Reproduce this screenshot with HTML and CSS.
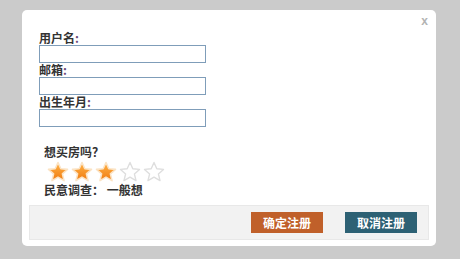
FILE: index.html
```html
<!DOCTYPE html>
<html lang="zh-CN">
<head>
  <meta charset="UTF-8">
  <title>注册</title>
  <link rel="stylesheet" href="styles.css">
</head>
<body>
  <div class="dialog">
    <a class="close" href="#">x</a>

    <div class="fields">
      <label>用户名<span class="colon">:</span></label>
      <input type="text" class="txt">
      <label>邮箱<span class="colon">:</span></label>
      <input type="text" class="txt">
      <label>出生年月<span class="colon">:</span></label>
      <input type="text" class="txt">
    </div>

    <div class="survey">
      <div class="question">想买房吗？</div>
      <div class="stars" id="stars"></div>
      <div class="result">民意调查： <span id="level">一般想</span></div>
    </div>

    <div class="footer">
      <button class="btn btn-ok">确定注册</button>
      <button class="btn btn-cancel">取消注册</button>
    </div>
  </div>

  <script>
    const levels = ['不想', '有点想', '一般想', '很想', '非常想'];
    const starsEl = document.getElementById('stars');
    const levelEl = document.getElementById('level');
    let rating = 3;

    function starSvg(on) {
      return '<svg viewBox="0 0 22 22" width="22" height="22">' +
        '<defs><linearGradient id="g" x1="0" y1="0" x2="0" y2="1">' +
        '<stop offset="0" stop-color="#ffb347"/><stop offset="1" stop-color="#f07b10"/>' +
        '</linearGradient></defs>' +
        '<polygon points="11,1.5 13.8,7.8 20.5,8.4 15.4,12.9 17,19.6 11,16.1 5,19.6 6.6,12.9 1.5,8.4 8.2,7.8" ' +
        (on ? 'fill="url(#g)" stroke="#fbe3c4" stroke-width="1.6"' : 'fill="#fff" stroke="#dedede" stroke-width="1.4"') +
        ' stroke-linejoin="round"/></svg>';
    }

    function drawStars() {
      starsEl.innerHTML = '';
      for (let i = 1; i <= 5; i++) {
        const s = document.createElement('span');
        s.className = 'star';
        s.innerHTML = starSvg(i <= rating);
        s.onclick = () => { rating = i; levelEl.textContent = levels[i - 1]; drawStars(); };
        starsEl.appendChild(s);
      }
    }

    drawStars();
  </script>
</body>
</html>
```

FILE: styles.css
```css
* { box-sizing: border-box; margin: 0; padding: 0; }
body {
  font-family: 'Noto Sans CJK SC', 'Liberation Sans', sans-serif;
  font-size: 12px;
  background: #cbcbcb;
  padding: 10px 24px 13px 22px;
  height: 259px;
  overflow: hidden;
}

.dialog {
  position: relative;
  width: 414px;
  height: 236px;
  background: #fff;
  border-radius: 5px;
  padding-top: 21px;
}

.close {
  position: absolute;
  top: 4px;
  right: 8px;
  color: #b3b3b3;
  font-family: 'Liberation Sans', sans-serif;
  font-weight: bold;
  font-size: 12px;
  text-decoration: none;
}

.fields {
  padding-left: 17px;
  display: flex;
  flex-direction: column;
  align-items: flex-start;
}

.fields label {
  font-weight: bold;
  color: #333;
  line-height: 14px;
  height: 14px;
}

.colon { color: #6a4a7a; }

.txt {
  width: 167px;
  height: 18px;
  border: 1px solid #7f9db9;
  margin-bottom: 0;
}

.survey {
  padding: 18px 0 0 22px;
  color: #333;
  font-weight: bold;
}

.question { line-height: 14px; }

.stars {
  display: flex;
  gap: 2px;
  height: 24px;
  padding-top: 2px;
  margin-left: 3px;
}

.star {
  width: 22px;
  height: 22px;
  cursor: pointer;
}

.result { line-height: 14px; }

.footer {
  margin: 8px 7px 0;
  height: 35px;
  background: #f2f2f2;
  border: 1px solid #e8e8e8;
  display: flex;
  justify-content: flex-end;
  align-items: flex-start;
  gap: 22px;
  padding: 6px 11px 0 0;
}

.btn {
  width: 72px;
  height: 21px;
  border: none;
  color: #fff;
  font-family: 'Noto Sans CJK SC', sans-serif;
  font-weight: bold;
  font-size: 12px;
  cursor: pointer;
}

.btn-ok { background: #c0602a; }
.btn-cancel { background: #2d6174; }
```
